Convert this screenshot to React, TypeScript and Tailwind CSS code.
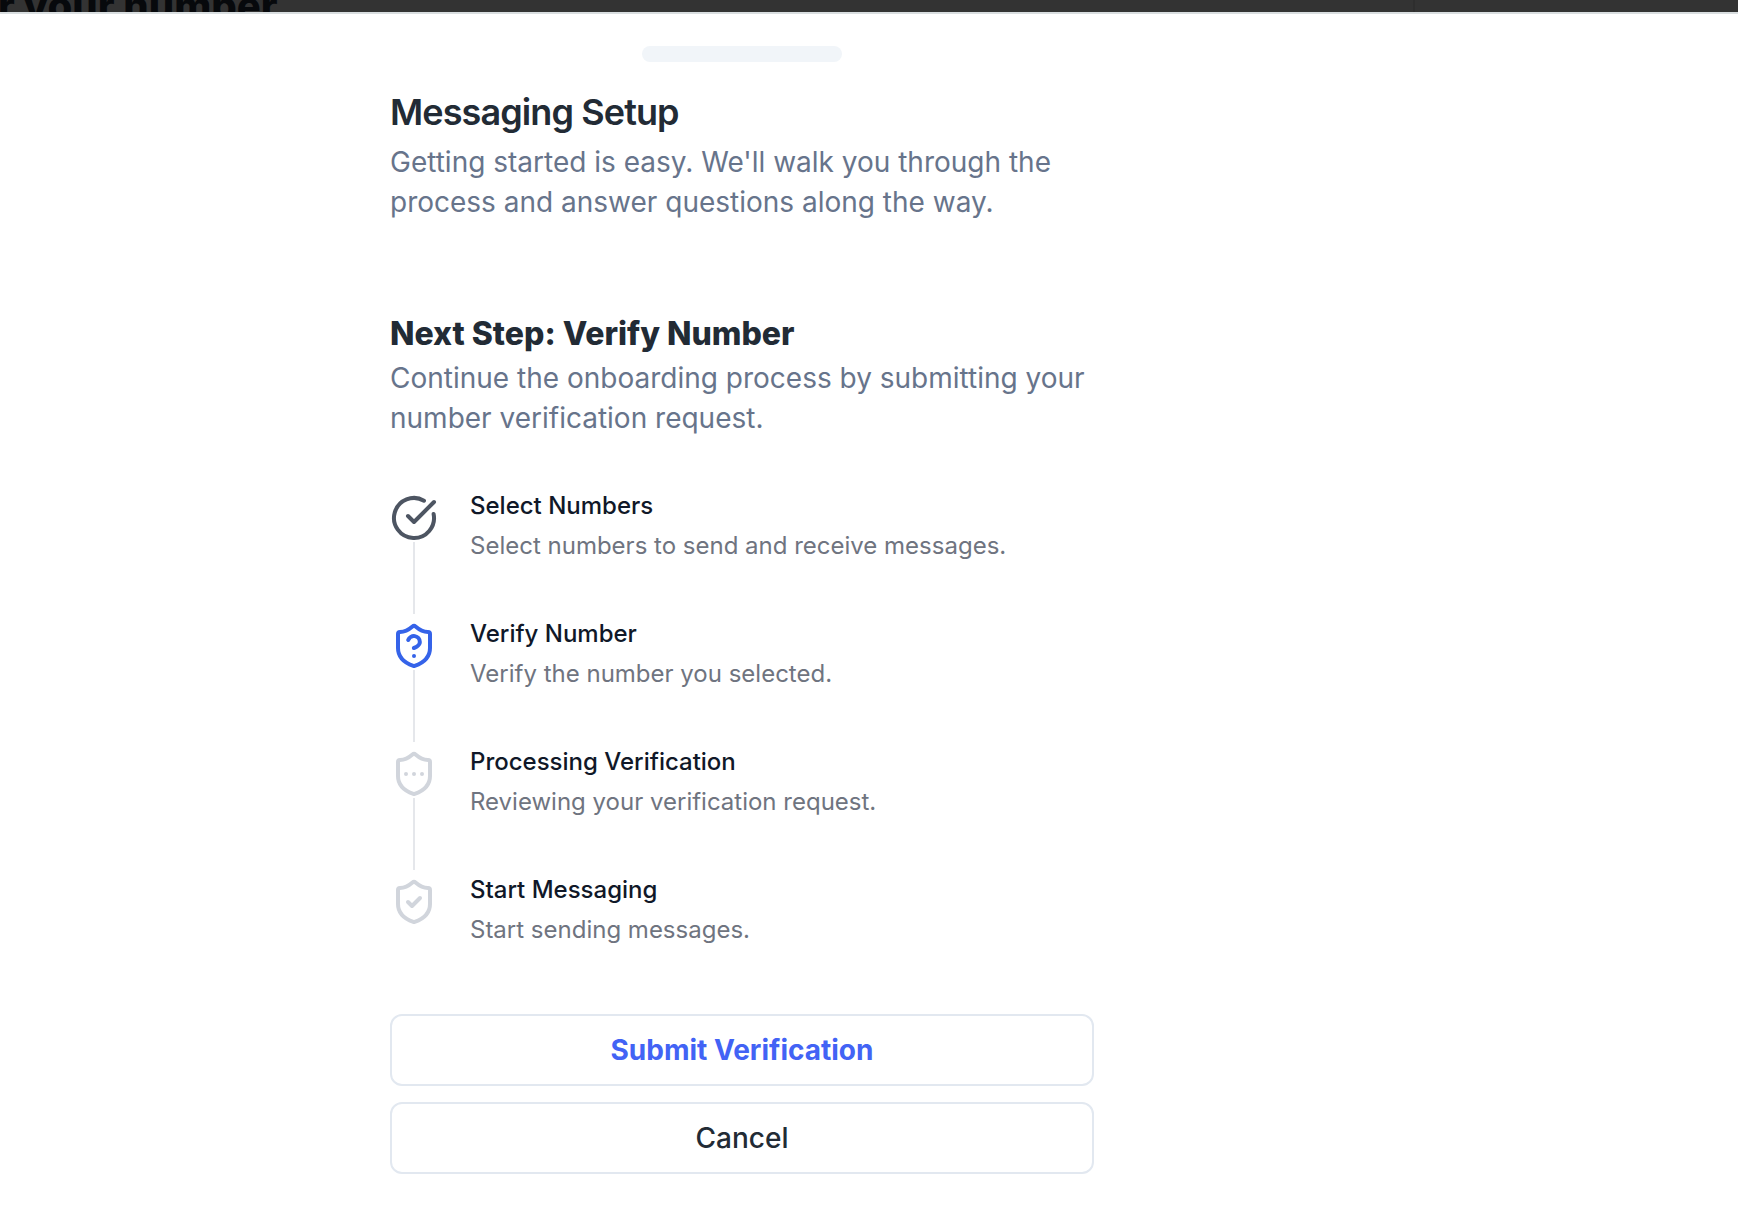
import { CircleCheckBig, ShieldCheck, ShieldEllipsis, ShieldQuestionMark, type LucideIcon } from "lucide-react";

type Step = { title: string; detail: string; icon: LucideIcon; tone: string };

const steps: Step[] = [
  { title: "Select Numbers", detail: "Select numbers to send and receive messages.", icon: CircleCheckBig, tone: "text-[#4d5562]" },
  { title: "Verify Number", detail: "Verify the number you selected.", icon: ShieldQuestionMark, tone: "text-[#3563e9]" },
  { title: "Processing Verification", detail: "Reviewing your verification request.", icon: ShieldEllipsis, tone: "text-gray-300" },
  { title: "Start Messaging", detail: "Start sending messages.", icon: ShieldCheck, tone: "text-gray-300" },
];

function StepRow({ step, last }: { step: Step; last: boolean }) {
  const Icon = step.icon;
  return (
    <li className="flex gap-8">
      <div className="flex flex-col items-center">
        <Icon className={`size-12 ${step.tone}`} aria-hidden="true" />
        {!last && <span className="mb-2 h-18 w-0.5 bg-gray-200" />}
      </div>
      <div>
        <h3 className="text-2xl leading-6 font-medium text-gray-900">{step.title}</h3>
        <p className="mt-2 text-2xl leading-10 text-[#6f7480]">{step.detail}</p>
      </div>
    </li>
  );
}

export default function App() {
  return (
    <div className="flex min-h-screen flex-col bg-[#333333] font-['Inter',sans-serif] [font-optical-sizing:none]">
      <div className="flex h-3 items-end overflow-hidden">
        <h1 className="-mb-4.5 -ml-0.5 flex-1 text-[40px] leading-12 font-extrabold text-[#07090c]">r your number</h1>
        <div className="h-3 w-[325px] border-l-2 border-[#2e2e2e]" />
      </div>
      <section role="dialog" aria-labelledby="setup-title" className="flex-1 border-t-2 border-[#d9dee0] bg-white pr-[254px] pb-8">
        <div className="mx-auto mt-8 h-4 w-50 rounded-lg bg-[#f1f5f9]" />
        <div className="mx-auto max-w-3xl px-8 pt-8">
          <h2 id="setup-title" className="text-4xl leading-9 font-semibold tracking-tight text-[#222b35]">Messaging Setup</h2>
          <p className="mt-3 text-[28px] leading-10 text-[#67748b]">
            Getting started is easy. We'll walk you through the process and answer questions along the way.
          </p>
          <h2 className="mt-22 text-[32px] leading-12 font-extrabold text-[#222b35]">Next Step: Verify Number</h2>
          <p className="text-[28px] leading-10 text-[#67748b]">
            Continue the onboarding process by submitting your number verification request.
          </p>
          <ol className="mt-14">
            {steps.map((step, i) => (
              <StepRow key={step.title} step={step} last={i === steps.length - 1} />
            ))}
          </ol>
          <div className="mt-16 flex flex-col gap-4">
            <button type="button" className="h-18 rounded-xl border-2 border-[#e2e8f0] text-[28px] leading-10 font-bold text-[#4263f5]">
              Submit Verification
            </button>
            <button type="button" className="h-18 rounded-xl border-2 border-[#e2e8f0] text-[28px] leading-10 font-medium text-[#222b35]">
              Cancel
            </button>
          </div>
        </div>
      </section>
    </div>
  );
}
